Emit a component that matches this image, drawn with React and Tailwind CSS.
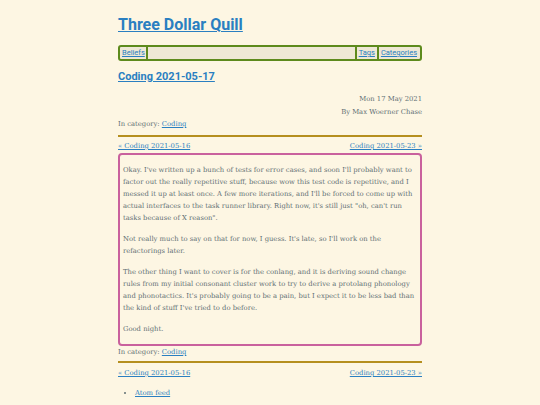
import React from "react";

const paragraphs = [
    "Okay. I've written up a bunch of tests for error cases, and soon I'll probably want to factor out the really repetitive stuff, because wow this test code is repetitive, and I messed it up at least once. A few more iterations, and I'll be forced to come up with actual interfaces to the task runner library. Right now, it's still just \"oh, can't run tasks because of X reason\".",
    "Not really much to say on that for now, I guess. It's late, so I'll work on the refactorings later.",
    "The other thing I want to cover is for the conlang, and it is deriving sound change rules from my initial consonant cluster work to try to derive a protolang phonology and phonotactics. It's probably going to be a pain, but I expect it to be less bad than the kind of stuff I've tried to do before.",
    "Good night.",
];

const linkCls = "text-[#2a7fc1] underline";

const PostNav = () => (
    <div className="flex justify-between h-[12px] items-center">
        <a href="#" className={linkCls}>« Coding 2021-05-16</a>
        <a href="#" className={linkCls}>Coding 2021-05-23 »</a>
    </div>
);

const App = () => {
    return (
        <div className="min-h-[405px] bg-[#fdf6e3] text-[#5f6f73] text-[6.8px] leading-[12px] font-['DejaVu_Serif',serif]">
            <div className="w-[304px] mx-auto pt-[13px]">
                <h1 className="font-['Roboto',sans-serif] font-bold text-[16px] leading-[24px]">
                    <a href="#" className={linkCls}>Three Dollar Quill</a>
                </h1>

                {/* menu */}
                <nav className="mt-[8px] h-[16px] flex items-center border-2 border-[#5d8a1c] rounded-[3px] bg-[#eee8d5] px-[1px] font-['Roboto',sans-serif] text-[7.5px]">
                    <a href="#" className={linkCls + " px-[1px]"}>Beliefs</a>
                    <span className="w-[2px] h-[12px] bg-[#5d8a1c]" />
                    <span className="flex-1" />
                    <span className="w-[2px] h-[12px] bg-[#5d8a1c]" />
                    <a href="#" className={linkCls + " px-[2px]"}>Tags</a>
                    <span className="w-[2px] h-[12px] bg-[#5d8a1c]" />
                    <a href="#" className={linkCls + " px-[2px]"}>Categories</a>
                </nav>

                <h2 className="mt-[7px] font-['Roboto',sans-serif] font-bold text-[11px] leading-[18px]">
                    <a href="#" className={linkCls}>Coding 2021-05-17</a>
                </h2>

                <div className="mt-[7px] text-right leading-[13px]">
                    <div>Mon 17 May 2021</div>
                    <div>By Max Woerner Chase</div>
                </div>
                <div className="leading-[10px]">
                    In category: <a href="#" className={linkCls}>Coding</a>
                </div>
                <hr className="mt-[6px] mb-[3px] border-0 h-[2px] bg-[#b58f1f]" />
                <PostNav />

                <div className="mt-[1px] border-2 border-[#c9619d] rounded-[4px] px-[3px]">
                    {paragraphs.map((p, i) => (
                        <p key={i} className="my-[9px]">{p}</p>
                    ))}
                </div>

                <div>
                    In category: <a href="#" className={linkCls}>Coding</a>
                </div>
                <hr className="mt-[3px] mb-[4px] border-0 h-[2px] bg-[#b58f1f]" />
                <PostNav />

                <ul className="mt-[8px] pl-[17px] list-disc">
                    <li><a href="#" className={linkCls}>Atom feed</a></li>
                </ul>
            </div>
        </div>
    );
};

export default App;
